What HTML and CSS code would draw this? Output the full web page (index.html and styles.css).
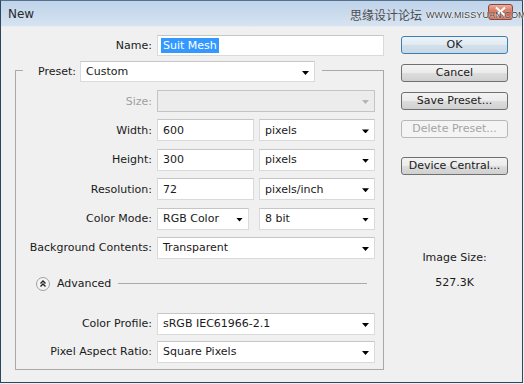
FILE: index.html
```html
<!DOCTYPE html>
<html lang="en">
<head>
  <meta charset="UTF-8" />
  <title>New</title>
  <link rel="stylesheet" href="styles.css">
</head>
<body>
  <div class="window">
    <!-- Title bar -->
    <div class="titlebar">
      <span class="title">New</span>
      <span class="close">
        <svg width="13" height="11" viewBox="0 0 13 11"><path d="M2 1.5 L11 9.5 M11 1.5 L2 9.5" stroke="#fff" stroke-width="2.2" fill="none"/></svg>
      </span>
      <span class="watermark"><span class="wm-cn">思缘设计论坛</span><span class="wm-url">www.MISSYUAN.COM</span></span>
    </div>

    <div class="content">
      <!-- Left: form -->
      <div class="form">
        <div class="row name-row">
          <span class="label">Name:</span>
          <div class="field input name-input"><span class="selected">Suit Mesh</span></div>
        </div>

        <div class="group">
          <div class="group-head">
            <span class="corner corner-left"></span>
            <span class="preset-label">Preset:</span>
            <div class="field select preset-select">Custom</div>
            <span class="corner corner-right"></span>
          </div>

          <div class="group-box">
            <div class="rows">
              <div class="row">
                <span class="label disabled">Size:</span>
                <div class="field select wide is-disabled"></div>
              </div>
              <div class="row">
                <span class="label">Width:</span>
                <div class="field input num">600</div>
                <div class="field select unit">pixels</div>
              </div>
              <div class="row">
                <span class="label">Height:</span>
                <div class="field input num">300</div>
                <div class="field select unit">pixels</div>
              </div>
              <div class="row">
                <span class="label">Resolution:</span>
                <div class="field input num">72</div>
                <div class="field select unit">pixels/inch</div>
              </div>
              <div class="row">
                <span class="label">Color Mode:</span>
                <div class="field select mode">RGB Color</div>
                <div class="field select unit">8 bit</div>
              </div>
              <div class="row">
                <span class="label">Background Contents:</span>
                <div class="field select wide">Transparent</div>
              </div>
            </div>

            <div class="advanced">
              <span class="adv-icon">
                <svg width="14" height="14" viewBox="0 0 14 14">
                  <circle cx="7" cy="7" r="6.5" fill="#f4f4f4" stroke="#a0a0a0"/>
                  <path d="M4.5 6.5 L7 4 L9.5 6.5 M4.5 9.5 L7 7 L9.5 9.5" stroke="#222" stroke-width="1.4" fill="none"/>
                </svg>
              </span>
              <span class="adv-text">Advanced</span>
              <span class="adv-line"></span>
            </div>

            <div class="rows rows-adv">
              <div class="row">
                <span class="label">Color Profile:</span>
                <div class="field select wide">sRGB IEC61966-2.1</div>
              </div>
              <div class="row">
                <span class="label">Pixel Aspect Ratio:</span>
                <div class="field select wide">Square Pixels</div>
              </div>
            </div>
          </div>
        </div>
      </div>

      <!-- Right: buttons -->
      <div class="side">
        <div class="btn btn-default">OK</div>
        <div class="btn">Cancel</div>
        <div class="btn">Save Preset...</div>
        <div class="btn btn-disabled">Delete Preset...</div>
        <div class="btn btn-device">Device Central...</div>
        <div class="image-size">
          <p>Image Size:</p>
          <p>527.3K</p>
        </div>
      </div>
    </div>
  </div>
</body>
</html>
```

FILE: styles.css
```css
* {
  box-sizing: border-box;
}

body {
  margin: 0;
  font-family: "DejaVu Sans", sans-serif;
  font-size: 11px;
  color: #1a1a1a;
  background-color: #f0f0f0;
}

.window {
  width: 523px;
  height: 383px;
  border: 1px solid #2c465e;
  border-top-color: #56718c;
  background-color: #f0f0f0;
  display: flex;
  flex-direction: column;
}

/* Title bar */
.titlebar {
  position: relative;
  height: 26px;
  display: flex;
  align-items: center;
  padding: 0 9px 0 7px;
  background: linear-gradient(#bfd3ea, #d6e3f1);
  border-bottom: 1px solid #e6edf5;
}

.title {
  flex: 1;
  font-size: 12px;
  font-weight: normal;
  color: #2a2a2a;
}

.close {
  width: 25px;
  height: 16px;
  margin-top: -4px;
  border: 1px solid #86463a;
  border-radius: 3px;
  background: linear-gradient(#eab0a2, #d66e55 50%, #c3452a 51%, #d5775f);
  display: flex;
  align-items: center;
  justify-content: center;
}

.watermark {
  position: absolute;
  z-index: 1;
  left: 349px;
  top: 5px;
  display: flex;
  align-items: center;
  gap: 4px;
  white-space: nowrap;
  color: #4d4d4d;
}

.wm-cn {
  font-family: "Noto Sans CJK SC", sans-serif;
  font-size: 12px;
}

.wm-url {
  font-family: "Liberation Sans", sans-serif;
  font-size: 9px;
  text-transform: uppercase;
  letter-spacing: 0.1px;
  color: #3d3d3d;
  text-shadow: 0 0 2px #fff, 0 0 1px #fff;
}

/* Layout */
.content {
  flex: 1;
  display: flex;
}

.form {
  width: 389px;
  padding-top: 8px;
}

.side {
  flex: 1;
  padding: 9px 0 0 11px;
}

.row {
  display: flex;
  align-items: center;
  height: 22px;
}

.label {
  width: 141px;
  padding-right: 5px;
  text-align: right;
  white-space: nowrap;
}

.label.disabled {
  color: #a0a0a0;
}

.name-row {
  height: 21px;
}

.name-row .label {
  width: 156px;
}

/* Fields */
.field {
  height: 100%;
  background-color: #fff;
  border: 1px solid #dadada;
  border-top-color: #c6c6c6;
  padding-left: 5px;
  display: flex;
  align-items: center;
  white-space: nowrap;
}

.name-input {
  width: 227px;
  padding-left: 3px;
}

.selected {
  background-color: #3399ff;
  color: #fff;
  padding: 1px 2px;
}

.select {
  position: relative;
}

.select::after {
  content: "";
  position: absolute;
  right: 5px;
  top: 9px;
  width: 7px;
  height: 4px;
  background-color: #000;
  clip-path: polygon(0 0, 100% 0, 50% 100%);
}

.select.is-disabled {
  background-color: #ececec;
  border-color: #c4c4c4;
}

.select.is-disabled::after {
  background-color: #b4b4b4;
}

.num {
  width: 97px;
  margin-right: 5px;
}

.unit {
  width: 116px;
}

.mode {
  width: 92px;
  margin-right: 10px;
}

.wide {
  width: 218px;
}

/* Group box */
.group {
  margin: 5px 0 0 14px;
  width: 369px;
}

.group-head {
  display: flex;
  height: 21px;
}

.corner {
  align-self: flex-end;
  height: 12px;
  border-top: 1px solid #a9a9a9;
}

.corner-left {
  width: 8px;
  border-left: 1px solid #a9a9a9;
}

.corner-right {
  flex: 1;
  margin-left: 7px;
  border-right: 1px solid #a9a9a9;
}

.preset-label {
  width: 57px;
  padding-right: 4px;
  text-align: right;
  align-self: center;
}

.preset-select {
  width: 235px;
}

.group-box {
  border: 1px solid #a9a9a9;
  border-top: none;
  padding: 8px 0 6px;
}

.rows {
  display: flex;
  flex-direction: column;
  gap: 7.4px;
}

.rows-adv {
  margin-top: 22px;
  gap: 6px;
}

.advanced {
  display: flex;
  align-items: center;
  height: 14px;
  margin-top: 18px;
  padding: 0 16px 0 20px;
}

.adv-icon {
  display: flex;
}

.adv-text {
  margin-left: 7px;
}

.adv-line {
  flex: 1;
  height: 1px;
  margin-left: 7px;
  background-color: #a9a9a9;
}

/* Buttons */
.btn {
  width: 107px;
  height: 18px;
  margin-bottom: 10px;
  border: 1px solid #707070;
  border-radius: 3px;
  background: linear-gradient(#f3f3f3, #ebebeb 50%, #dddddd 51%, #d0d0d0);
  text-align: center;
  line-height: 16px;
}

.btn-default {
  border-color: #3c7fb1;
  background: linear-gradient(#edf3f8, #e1eaf2 50%, #d3e0eb 51%, #c8d8e6);
}

.btn-disabled {
  border-color: #b4b8ba;
  background: #f4f4f4;
  color: #a4a4a4;
}

.btn-device {
  margin-top: 19px;
}

.image-size {
  width: 107px;
  margin-top: 75px;
  text-align: center;
}

.image-size p {
  margin: 0 0 10px;
  line-height: 15px;
}
```
